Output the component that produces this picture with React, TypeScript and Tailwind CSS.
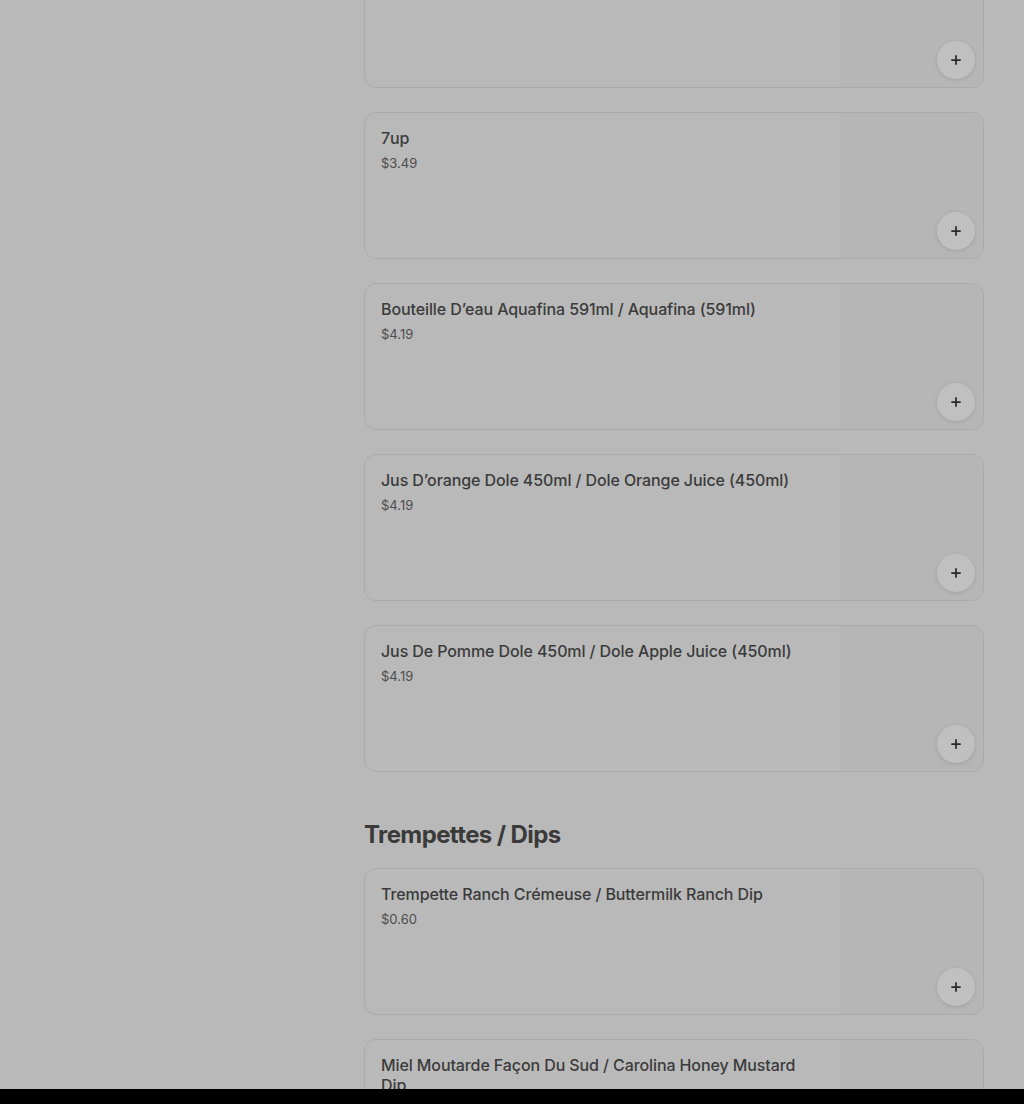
import { Plus } from "lucide-react";

type Item = { name: string; price: string };

const drinks: Item[] = [
  { name: "Coca-Cola", price: "$3.49" },
  { name: "7up", price: "$3.49" },
  { name: "Bouteille D’eau Aquafina 591ml / Aquafina (591ml)", price: "$4.19" },
  { name: "Jus D’orange Dole 450ml / Dole Orange Juice (450ml)", price: "$4.19" },
  { name: "Jus De Pomme Dole 450ml / Dole Apple Juice (450ml)", price: "$4.19" },
];

const dips: Item[] = [
  { name: "Trempette Ranch Crémeuse / Buttermilk Ranch Dip", price: "$0.60" },
  { name: "Miel Moutarde Façon Du Sud / Carolina Honey Mustard Dip", price: "$0.60" },
];

const ItemCard = ({ item, hideText }: { item: Item; hideText?: boolean }) => {
  return (
    <div className="flex h-[147px] rounded-xl border border-[#ababab] bg-[#b9b9b9] overflow-hidden">
      <div className="flex-1 min-w-0 px-4 pt-[15px]">
        {!hideText && (
          <>
            <div className="max-w-[430px] text-[16px] leading-5 font-medium tracking-[-0.1px] text-[#3b3b3b]">
              {item.name}
            </div>
            <div className="mt-[5px] text-[13px] leading-5 text-[#4d4d4d]">
              {item.price}
            </div>
          </>
        )}
      </div>
      {/* image placeholder */}
      <div className="relative w-[143px] shrink-0 bg-[#b6b6b6]">
        <button className="absolute bottom-[8px] right-[8px] flex h-[38px] w-[38px] items-center justify-center rounded-full bg-[#c0c0c0] shadow-[0_1px_4px_rgba(0,0,0,0.12)]">
          <Plus size={14} strokeWidth={3} className="text-[#2a2a2a]" />
        </button>
      </div>
    </div>
  );
};

export default function App() {
  return (
    <div
      className="flex h-[1104px] flex-col bg-[#b9b9b9]"
      style={{ fontFamily: "Inter, 'Noto Sans', Arial, sans-serif" }}
    >
      <div className="flex flex-1 overflow-hidden">
        <aside className="w-[364px] shrink-0" />
        <main className="w-[620px] shrink-0 -mt-[59px]">
          <div className="flex flex-col gap-6">
            {drinks.map((d, i) => (
              <ItemCard key={d.name} item={d} hideText={i === 0} />
            ))}
          </div>

          <h2 className="mt-[47px] mb-[17px] text-[24px] leading-8 font-bold tracking-[-0.6px] text-[#3a3a3a]">
            Trempettes / Dips
          </h2>

          <div className="flex flex-col gap-6">
            {dips.map((d) => (
              <ItemCard key={d.name} item={d} />
            ))}
          </div>
        </main>
      </div>
      <div className="h-[15px] shrink-0 bg-black" />
    </div>
  );
}
